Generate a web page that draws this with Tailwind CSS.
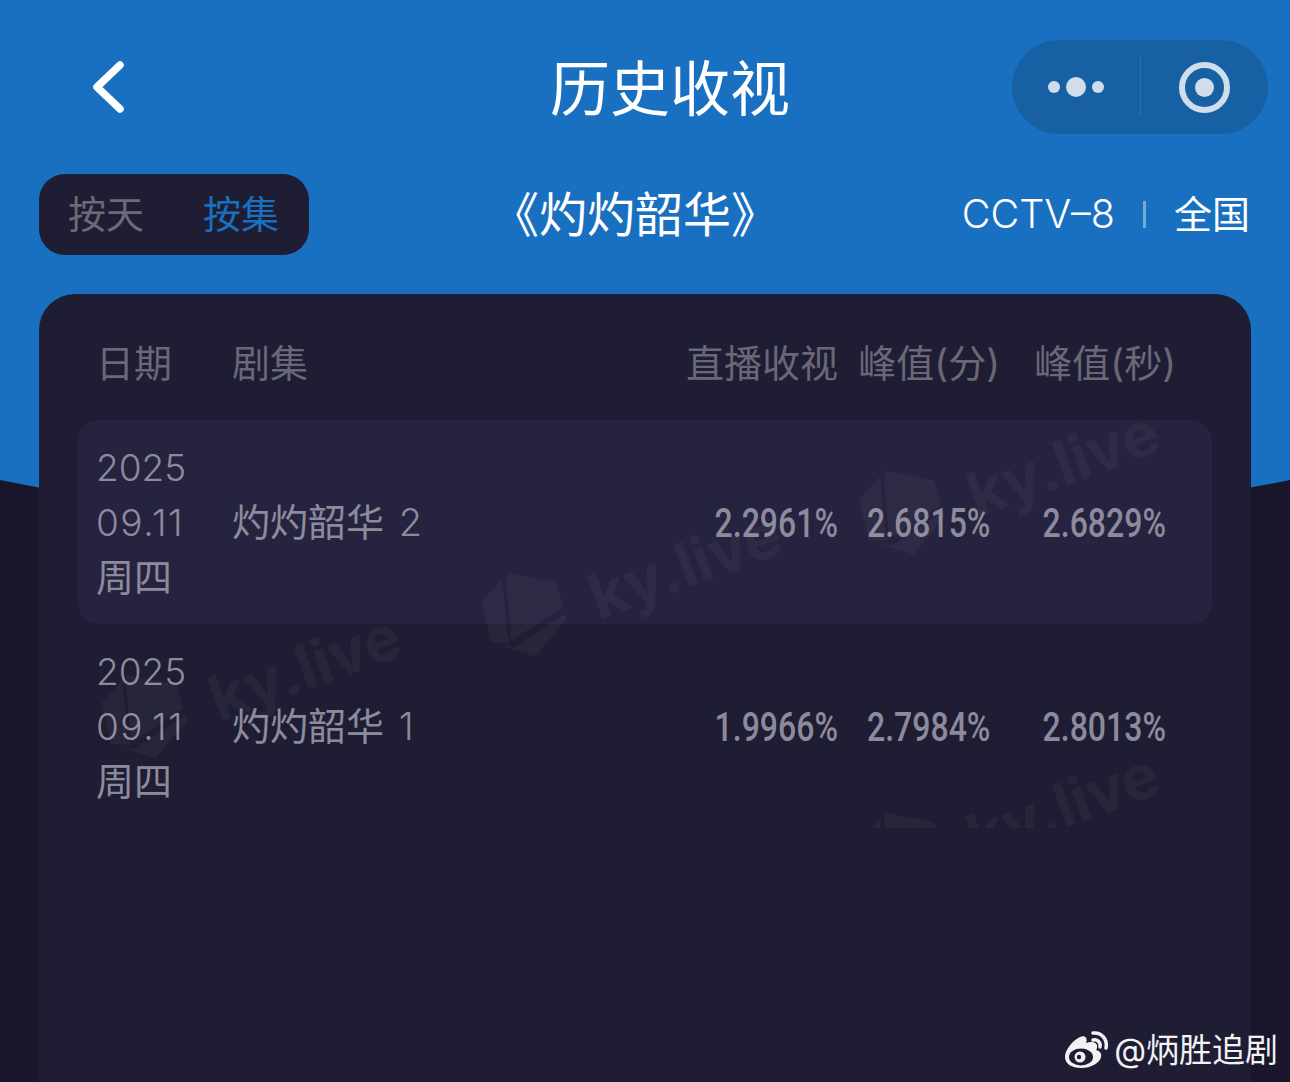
<!DOCTYPE html>
<html lang="zh-CN">
<head>
    <meta charset="UTF-8">
    <meta name="viewport" content="width=device-width, initial-scale=1.0">
    <title>历史收视</title>
    <script src="https://cdn.jsdelivr.net/npm/@tailwindcss/browser@4"></script>
</head>
<body class="relative h-[1082px] w-[1290px] overflow-hidden bg-[#17162b] font-['Inter','Noto_Sans_CJK_SC',sans-serif]">
    <!-- Blue backdrop with curved bottom -->
    <svg class="absolute left-0 top-0" width="1290" height="600" viewBox="0 0 1290 600">
        <path d="M0 0H1290V480Q645 610 0 480Z" fill="#1a70c0"/>
    </svg>

    <div class="relative pt-10">
        <!-- Title bar -->
        <header class="flex h-[94px] items-center pl-[91px] pr-[22px]">
            <svg width="34" height="56" viewBox="0 0 34 56" fill="none" class="shrink-0">
                <path d="M29 6L6 28L29 50" stroke="#fff" stroke-width="7.5" stroke-linecap="round" stroke-linejoin="round"/>
            </svg>
            <h1 class="ml-[425px] pt-[4px] text-[60px] font-normal leading-none text-white">历史收视</h1>
            <div class="ml-auto flex h-[94px] w-[256px] items-center rounded-full bg-[#1760a3]">
                <div class="flex w-[128px] items-center justify-center gap-[6px]">
                    <span class="h-3 w-3 rounded-full bg-[#d0deeb]"></span>
                    <span class="h-5 w-5 rounded-full bg-[#d0deeb]"></span>
                    <span class="h-3 w-3 rounded-full bg-[#d0deeb]"></span>
                </div>
                <div class="h-[60px] w-px bg-white/10"></div>
                <div class="flex flex-1 items-center justify-center">
                    <div class="flex h-[51px] w-[51px] items-center justify-center rounded-full border-[6px] border-[#d0deeb]">
                        <span class="h-[19px] w-[19px] rounded-full bg-[#d0deeb]"></span>
                    </div>
                </div>
            </div>
        </header>

        <!-- Filter row -->
        <div class="mt-10 flex h-[81px] items-center pl-[39px] pr-[40px]">
            <div class="flex h-[81px] w-[270px] items-center gap-[59px] rounded-[26px] bg-[#1e1d33] pl-[29px] text-[38px]">
                <span class="text-[#6c6a76]">按天</span>
                <span class="text-[#1a70c0]">按集</span>
            </div>
            <h2 class="ml-[182px] text-[48px] font-normal text-white">《灼灼韶华》</h2>
            <div class="ml-auto flex items-center text-white">
                <span class="text-[39.5px] font-light">CCTV–8</span>
                <span class="ml-[28px] mr-[28px] h-[27px] w-[3px] bg-white/40"></span>
                <span class="text-[38px] font-normal">全国</span>
            </div>
        </div>

        <!-- Ratings table -->
        <section class="mx-[39px] mt-[39px] h-[788px] rounded-t-[36px] bg-[#1e1d33] px-[39px] pt-[41px]">
            <div class="mb-[35px] grid h-[50px] grid-cols-[136px_1fr_152px_162px_176px] items-center pl-[18px] pr-9 text-[38px] text-[#6a6876]">
                <span>日期</span>
                <span>剧集</span>
                <span class="whitespace-nowrap text-right">直播收视</span>
                <span class="whitespace-nowrap text-right">峰值(分)</span>
                <span class="whitespace-nowrap text-right">峰值(秒)</span>
            </div>

            <div class="grid h-[204px] grid-cols-[136px_1fr_160px_145px_183px] items-center rounded-[20px] bg-[#25233f] pl-[18px] pr-[46px] text-[#8d8b9b]">
                <div class="text-[37px] font-light leading-[55px]">2025<br><span class="tracking-[1.5px]">09.11</span><br><span class="text-[38px] font-normal">周四</span></div>
                <div class="text-[38px]">灼灼韶华<span class="ml-[4px] font-light"> 2</span></div>
                <div class="origin-right scale-x-[0.8] pt-1 text-right font-['Roboto'] text-[40px] font-medium">2.2961%</div>
                <div class="origin-right scale-x-[0.8] pt-1 text-right font-['Roboto'] text-[40px] font-medium">2.6815%</div>
                <div class="origin-right scale-x-[0.8] pt-1 text-right font-['Roboto'] text-[40px] font-medium">2.6829%</div>
            </div>
            <div class="grid h-[204px] grid-cols-[136px_1fr_160px_145px_183px] items-center pl-[18px] pr-[46px] text-[#8d8b9b]">
                <div class="text-[37px] font-light leading-[55px]">2025<br><span class="tracking-[1.5px]">09.11</span><br><span class="text-[38px] font-normal">周四</span></div>
                <div class="text-[38px]">灼灼韶华<span class="ml-[4px] font-light"> 1</span></div>
                <div class="origin-right scale-x-[0.8] pt-1 text-right font-['Roboto'] text-[40px] font-medium">1.9966%</div>
                <div class="origin-right scale-x-[0.8] pt-1 text-right font-['Roboto'] text-[40px] font-medium">2.7984%</div>
                <div class="origin-right scale-x-[0.8] pt-1 text-right font-['Roboto'] text-[40px] font-medium">2.8013%</div>
            </div>
        </section>
    </div>

    <!-- ky.live watermarks, clipped at the end of the list -->
    <div class="pointer-events-none absolute left-0 top-[400px] h-[428px] w-[1290px] overflow-hidden text-white/[0.035]">
        <div class="absolute left-[481px] top-[184px] flex origin-left -rotate-[20deg] items-center gap-[24px] text-[62px] font-bold leading-none">
            <svg class="rotate-[20deg]" width="90" height="90" viewBox="0 0 90 90" fill="currentColor"><path d="M3 33L24 10L29 66L32 74L13 74Z"/><path d="M29 4L78 14L85 38L33 72L28 16Z"/><path d="M87 45L88 51L57 88L20 76L36 79Z"/></svg>
            <span class="translate-y-[10px]">ky.live</span>
        </div>
        <div class="absolute left-[859px] top-[82px] flex origin-left -rotate-[20deg] items-center gap-[24px] text-[62px] font-bold leading-none">
            <svg class="rotate-[20deg]" width="90" height="90" viewBox="0 0 90 90" fill="currentColor"><path d="M3 33L24 10L29 66L32 74L13 74Z"/><path d="M29 4L78 14L85 38L33 72L28 16Z"/><path d="M87 45L88 51L57 88L20 76L36 79Z"/></svg>
            <span class="translate-y-[10px]">ky.live</span>
        </div>
        <div class="absolute left-[101px] top-[286px] flex origin-left -rotate-[20deg] items-center gap-[24px] text-[62px] font-bold leading-none">
            <svg class="rotate-[20deg]" width="90" height="90" viewBox="0 0 90 90" fill="currentColor"><path d="M3 33L24 10L29 66L32 74L13 74Z"/><path d="M29 4L78 14L85 38L33 72L28 16Z"/><path d="M87 45L88 51L57 88L20 76L36 79Z"/></svg>
            <span class="translate-y-[10px]">ky.live</span>
        </div>
        <div class="absolute left-[859px] top-[424px] flex origin-left -rotate-[20deg] items-center gap-[24px] text-[62px] font-bold leading-none">
            <svg class="rotate-[20deg]" width="90" height="90" viewBox="0 0 90 90" fill="currentColor"><path d="M3 33L24 10L29 66L32 74L13 74Z"/><path d="M29 4L78 14L85 38L33 72L28 16Z"/><path d="M87 45L88 51L57 88L20 76L36 79Z"/></svg>
            <span class="translate-y-[10px]">ky.live</span>
        </div>
    </div>

    <!-- Weibo credit -->
    <div class="absolute right-[12px] top-[1028px] flex items-center gap-[4px] text-[33px] leading-[44px] text-[#f2f2f4]">
        <svg width="46" height="40" viewBox="0 0 46 40" fill="none">
            <path d="M17 38C8 38 1 34 1 27C1 20 8 11 16 7C21 5 24 8 22 13C27 11 34 12 33 17C33 18 33 19 32 20C36 21 38 24 37 27C36 33 27 38 17 38Z" fill="#f2f2f4"/>
            <ellipse cx="17" cy="27" rx="12" ry="8.5" fill="#1e1d33"/>
            <circle cx="16" cy="27" r="5.5" fill="#f2f2f4"/>
            <circle cx="15" cy="27" r="2.2" fill="#1e1d33"/>
            <path d="M29 3C37 2 44 9 42 18" stroke="#f2f2f4" stroke-width="3.5" stroke-linecap="round"/>
            <path d="M29 10C33 9 37 12 36 17" stroke="#f2f2f4" stroke-width="3.5" stroke-linecap="round"/>
        </svg>
        <span>@炳胜追剧</span>
    </div>
</body>
</html>
